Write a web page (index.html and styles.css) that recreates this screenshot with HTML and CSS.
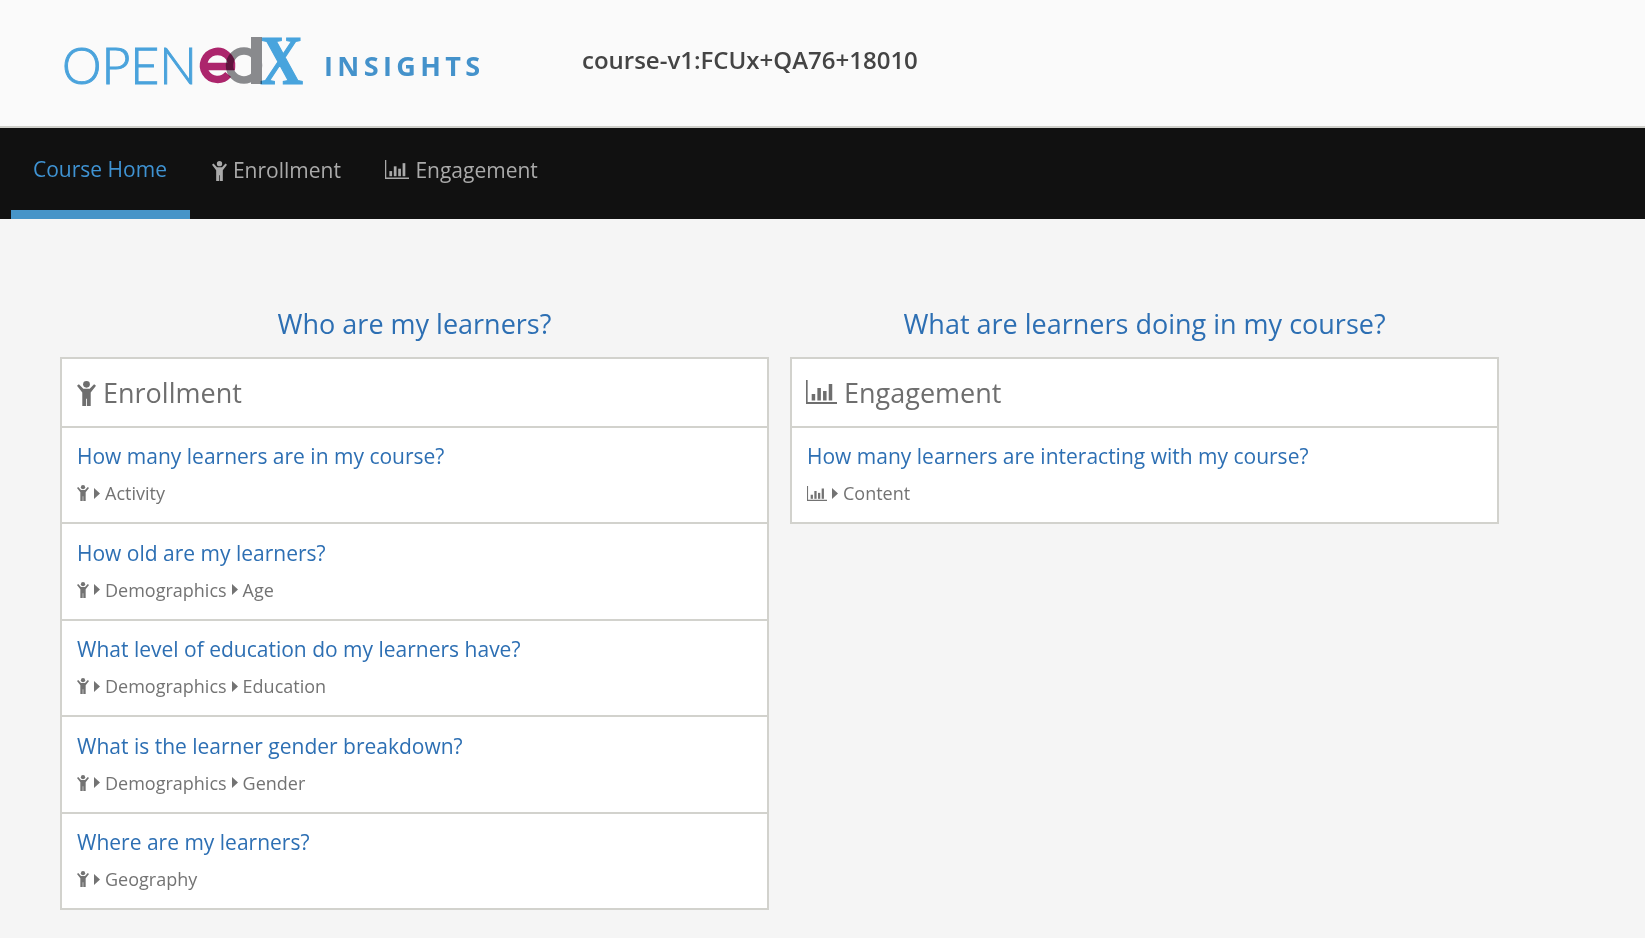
FILE: index.html
```html
<!DOCTYPE html>
<html lang="en">
<head>
<meta charset="utf-8">
<title>Insights</title>
<link rel="stylesheet" href="styles.css">
</head>
<body>
<svg class="defs" width="0" height="0" aria-hidden="true">
  <symbol id="person" viewBox="0 0 18 24" preserveAspectRatio="none">
    <circle cx="9" cy="3.2" r="3.2"/>
    <path d="M1.8 3 L0 4.6 L5 11 V24 H8.6 V17 H9.4 V24 H13 V11 L18 4.6 L16.2 3 L12 7.4 H6 Z"/>
  </symbol>
  <symbol id="bars" viewBox="0 0 30 24" preserveAspectRatio="none">
    <path d="M0 0 H1.6 V22 H30 V24 H0 Z"/>
    <rect x="5.5" y="14" width="3.4" height="6.5"/>
    <rect x="11" y="8" width="3.4" height="12.5"/>
    <rect x="16.5" y="11" width="3.4" height="9.5"/>
    <rect x="22" y="4" width="3.4" height="16.5"/>
  </symbol>
  <symbol id="caret" viewBox="0 0 6 12" preserveAspectRatio="none">
    <path d="M0 0 L6 6 L0 12 Z"/>
  </symbol>
</svg>

<header class="site-header">
  <svg class="logo" viewBox="0 0 240 48" width="240" height="48" role="img" aria-label="Open edX">
    <text class="logo-open" x="-2" y="47" textLength="135" lengthAdjust="spacingAndGlyphs">OPEN</text>
    <text class="logo-x" x="196" y="47" textLength="43" lengthAdjust="spacingAndGlyphs">X</text>
    <g class="logo-d">
      <circle cx="180" cy="28.5" r="14.5"/>
      <path class="logo-d-stem" d="M192.5 0 V47"/>
    </g>
    <path class="logo-e" d="M139.5 29.5 H167.5 A14 14 0 1 0 164.2 37.5"/>
  </svg>
  <span class="product">INSIGHTS</span>
  <span class="course-id">course-v1:FCUx+QA76+18010</span>
</header>

<nav class="site-nav">
  <a class="tab active" href="#">Course Home</a>
  <a class="tab" href="#"><svg class="tab-icon person"><use href="#person"/></svg>Enrollment</a>
  <a class="tab" href="#"><svg class="tab-icon bars"><use href="#bars"/></svg>Engagement</a>
</nav>

<main class="content">
  <section class="column">
    <h2 class="question">Who are my learners?</h2>
    <div class="panel">
      <h3 class="panel-title"><svg class="title-icon person"><use href="#person"/></svg>Enrollment</h3>
      <div class="item">
        <a class="item-link" href="#">How many learners are in my course?</a>
        <div class="crumbs"><svg class="crumb-icon person"><use href="#person"/></svg><svg class="caret"><use href="#caret"/></svg><span>Activity</span></div>
      </div>
      <div class="item">
        <a class="item-link" href="#">How old are my learners?</a>
        <div class="crumbs"><svg class="crumb-icon person"><use href="#person"/></svg><svg class="caret"><use href="#caret"/></svg><span>Demographics</span><svg class="caret"><use href="#caret"/></svg><span>Age</span></div>
      </div>
      <div class="item">
        <a class="item-link" href="#">What level of education do my learners have?</a>
        <div class="crumbs"><svg class="crumb-icon person"><use href="#person"/></svg><svg class="caret"><use href="#caret"/></svg><span>Demographics</span><svg class="caret"><use href="#caret"/></svg><span>Education</span></div>
      </div>
      <div class="item">
        <a class="item-link" href="#">What is the learner gender breakdown?</a>
        <div class="crumbs"><svg class="crumb-icon person"><use href="#person"/></svg><svg class="caret"><use href="#caret"/></svg><span>Demographics</span><svg class="caret"><use href="#caret"/></svg><span>Gender</span></div>
      </div>
      <div class="item">
        <a class="item-link" href="#">Where are my learners?</a>
        <div class="crumbs"><svg class="crumb-icon person"><use href="#person"/></svg><svg class="caret"><use href="#caret"/></svg><span>Geography</span></div>
      </div>
    </div>
  </section>
  <section class="column">
    <h2 class="question">What are learners doing in my course?</h2>
    <div class="panel">
      <h3 class="panel-title"><svg class="title-icon bars"><use href="#bars"/></svg>Engagement</h3>
      <div class="item">
        <a class="item-link" href="#">How many learners are interacting with my course?</a>
        <div class="crumbs"><svg class="crumb-icon bars"><use href="#bars"/></svg><svg class="caret"><use href="#caret"/></svg><span>Content</span></div>
      </div>
    </div>
  </section>
</main>
</body>
</html>
```

FILE: styles.css
```css
* { box-sizing: border-box; }
html, body { margin: 0; padding: 0; }
body {
  background: #f5f5f5;
  font-family: "Open Sans", "Liberation Sans", sans-serif;
  color: #6b6b6b;
  height: 938px;
  overflow: hidden;
}
a { text-decoration: none; }
svg { fill: currentColor; }
.defs { position: absolute; }

.site-header {
  height: 128px;
  background: #fafafa;
  border-bottom: 2px solid #cfcfca;
  display: flex;
  align-items: flex-start;
  padding-left: 64px;
}
.logo { margin-top: 37px; flex: none; overflow: visible; }
.logo-open {
  font-family: "Lato", sans-serif;
  font-weight: 300;
  font-size: 52px;
  fill: #4aa3dc;
  stroke: #4aa3dc;
  stroke-width: 1px;
}
.logo-e {
  fill: none;
  stroke: #b0256e;
  stroke-width: 7.5px;
  mix-blend-mode: multiply;
}
.logo-d {
  fill: none;
  stroke: #8c8d90;
  stroke-width: 7.5px;
  mix-blend-mode: multiply;
}
.logo-d-stem { stroke-width: 11px; }
.logo-x {
  font-family: "Liberation Serif", serif;
  font-weight: 700;
  font-size: 69px;
  fill: #48a4dd;
  stroke: #48a4dd;
  stroke-width: 1.2px;
}
.product {
  margin: 48px 0 0 20px;
  width: 240px;
  font-weight: 700;
  font-size: 27px;
  line-height: 36px;
  letter-spacing: 4.4px;
  color: #4492cb;
  flex: none;
}
.course-id {
  margin: 43px 0 0 18px;
  font-weight: 600;
  font-size: 24px;
  line-height: 34px;
  color: #444;
}

.site-nav {
  height: 91px;
  background: #111;
  display: flex;
  padding-left: 11px;
}
.tab {
  display: flex;
  align-items: flex-start;
  padding: 27px 22px 0;
  font-size: 21px;
  line-height: 30px;
  color: #aaa;
}
.tab.active {
  color: #3f93d3;
  border-bottom: 9px solid #4694c8;
  padding: 26px 23px 0 22px;
}
.tab-icon { flex: none; }
.tab-icon.person { width: 15px; height: 20px; margin: 6px 6px 0 0; }
.tab-icon.bars { width: 24px; height: 19px; margin: 5px 6.5px 0 0; }

.content {
  display: flex;
  gap: 21px;
  padding: 0 0 0 60px;
  align-items: flex-start;
}
.column { width: 709px; flex: none; }
.question {
  margin: 0;
  padding-top: 84px;
  height: 138px;
  line-height: 42px;
  text-align: center;
  font-weight: 400;
  font-size: 27px;
  color: #2d6fb3;
}
.panel {
  background: #fff;
  border: 2px solid #d2d2cd;
}
.panel-title {
  margin: 0;
  height: 69px;
  padding: 13px 0 0 15px;
  display: flex;
  align-items: flex-start;
  font-weight: 400;
  font-size: 27px;
  line-height: 42px;
  color: #6e6e6e;
  border-bottom: 2px solid #d2d2cd;
}
.title-icon.person { width: 19px; height: 25px; margin: 9px 7px 0 0; flex: none; }
.title-icon.bars { width: 31px; height: 24px; margin: 8px 7px 0 -1px; flex: none; }
.item {
  height: 96.5px;
  padding: 14.5px 15px 0;
  border-bottom: 2px solid #d2d2cd;
}
.item:first-of-type { height: 96px; padding-top: 14px; }
.item:last-child { border-bottom: 0; height: 94.5px; }
.item:only-of-type { height: 94px; }
.item-link {
  display: block;
  font-size: 21px;
  line-height: 28px;
  color: #2d6fb3;
}
.crumbs {
  display: flex;
  align-items: center;
  margin-top: 10px;
  font-size: 18px;
  line-height: 26px;
  color: #737373;
}
.crumb-icon.person { width: 12px; height: 16px; flex: none; }
.crumb-icon.bars { width: 20px; height: 15px; flex: none; }
.caret { width: 6px; height: 11px; margin: 0 5px; flex: none; }
```
